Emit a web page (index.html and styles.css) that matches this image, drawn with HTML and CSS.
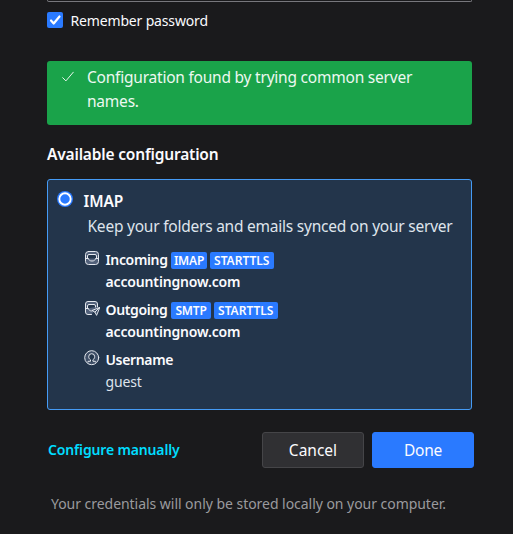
FILE: index.html
```
<!DOCTYPE html>
<html lang="en">
<head>
<meta charset="utf-8">
<title>Account Setup</title>
<link rel="stylesheet" href="styles.css">
</head>
<body>
<main class="setup">
  <div class="field"></div>
  <label class="remember">
    <svg class="checkbox" viewBox="0 0 16 16"><rect width="16" height="16" rx="2" fill="#2a7aff"/><path d="M4 8.500l2.700 3L12.500 4.500" fill="none" stroke="#fff" stroke-width="2.200" stroke-linecap="round" stroke-linejoin="round"/></svg>
    <span class="remember-text">Remember password</span>
  </label>
  <div class="notice">
    <svg class="tick" viewBox="0 0 12 12"><path d="M.7 6.700l3.200 3.200L11.300 1.200" fill="none" stroke="#e8f6ed" stroke-linecap="round" stroke-linejoin="round"/></svg>
    <p class="notice-text">Configuration found by trying common server names.</p>
  </div>
  <h2 class="heading">Available configuration</h2>
  <section class="config">
    <div class="option">
      <svg class="radio" viewBox="0 0 16 16"><circle cx="8" cy="8" r="8" fill="#2a7aff"/><circle cx="8" cy="8" r="5.700" fill="none" stroke="#fff" stroke-width="1.900"/></svg>
      <span class="protocol">IMAP</span>
    </div>
    <p class="description">Keep your folders and emails synced on your server</p>
    <div class="server">
      <svg class="icon" viewBox="0 0 16 16" fill="none" stroke="#e4e8ee" stroke-linejoin="round" stroke-linecap="round"><rect x="1.500" y="1.500" width="13" height="13" rx="3" fill="#52617a"/><path d="M3.500 8.500V6A1.500 1.500 0 0 1 5 4.500h6A1.500 1.500 0 0 1 12.500 6v2.500" fill="#24364c"/><path d="M1.500 8.500h3c.3 1.600 1.300 2.500 3.500 2.500s3.200-.9 3.500-2.500h3"/></svg>
      <div class="details">
        <div class="row"><span class="name incoming">Incoming</span><span class="tag imap">IMAP</span><span class="tag tls">STARTTLS</span></div>
        <div class="host">accountingnow.com</div>
      </div>
    </div>
    <div class="server">
      <svg class="icon" viewBox="0 0 16 16" fill="none" stroke="#e4e8ee" stroke-linejoin="round" stroke-linecap="round"><path d="M7.500 14.500H4A2.500 2.500 0 0 1 1.500 12V4A2.500 2.500 0 0 1 4 1.500h7A2.500 2.500 0 0 1 13.500 4v3" fill="#52617a"/><path d="M3.500 8.500V6A1.500 1.500 0 0 1 5 4.500h5A1.500 1.500 0 0 1 11.500 6v1" fill="#24364c"/><path d="M1.500 8.500h3c.3 1.600 1.300 2.500 3 2.500"/><path d="M15.500 7.500l-7.500 3 2.900 1.500 1.500 3zM11 12l4.500-4.500" fill="#40516a"/></svg>
      <div class="details">
        <div class="row"><span class="name outgoing">Outgoing</span><span class="tag smtp">SMTP</span><span class="tag tls">STARTTLS</span></div>
        <div class="host">accountingnow.com</div>
      </div>
    </div>
    <div class="server">
      <svg class="icon user" viewBox="0 0 16 16" fill="none" stroke="#e4e8ee" stroke-linejoin="round" stroke-linecap="round"><circle cx="7.700" cy="7.700" r="7" fill="#3f4f67"/><path d="M4 12v-.7h2.500V9.800C5.200 8.900 4.700 7.900 4.700 6.700a3 3 0 0 1 6 0c0 1.200-.5 2.200-1.800 3.100v1.500h2.500v.7" fill="#24364c"/></svg>
      <div class="details">
        <div class="row"><span class="name username">Username</span></div>
        <div class="value">guest</div>
      </div>
    </div>
  </section>
  <footer class="actions">
    <a class="manual">Configure manually</a>
    <div class="buttons">
      <button class="button">Cancel</button>
      <button class="button primary">Done</button>
    </div>
  </footer>
  <p class="footnote">Your credentials will only be stored locally on your computer.</p>
</main>
</body>
</html>
```
FILE: styles.css
```
* { box-sizing: border-box; }
body { margin: 0; height: 534px; overflow: hidden; background: #1a1a1c; color: #fbfbfe; font-family: "Noto Sans", sans-serif; font-size: 14px; }
p, h2 { margin: 0; }
svg { display: block; flex: none; }
.setup { width: 427px; margin-left: 47px; }
.field { width: 425px; height: 2px; border: 1px solid #77777c; border-top: 0; border-radius: 0 0 3px 3px; }
.remember { display: flex; align-items: center; gap: 7.5px; height: 20px; margin-top: 8px; line-height: 20px; letter-spacing: -.16px; }
.remember-text { padding-top: 2px; }
.checkbox, .radio { width: 16px; height: 16px; }
.notice { display: flex; width: 425px; height: 64px; margin-top: 31px; padding: 4px 40px 0 15px; border-radius: 3px; background: #1aa34a; font-size: 15.5px; line-height: 24px; letter-spacing: -.22px; }
.tick { width: 12px; height: 12px; margin: 6px 13px 0 0; }
.notice-text { color: #edf8f1; }
.heading { margin-top: 17px; font-size: 15.5px; font-weight: 600; line-height: 24px; letter-spacing: -.18px; }
.config { width: 425px; height: 231px; margin-top: 13px; padding: 9px 0 0 9px; border: 1px solid #459bf5; border-radius: 3px; background: #23354b; }
.option { display: flex; gap: 10.5px; height: 24px; font-size: 15.5px; font-weight: 600; line-height: 24px; letter-spacing: -.1px; }
.radio { margin-top: 2px; }
.description { height: 24px; padding-left: 30.5px; color: #dfe4eb; font-size: 15.5px; line-height: 26px; letter-spacing: -.23px; white-space: nowrap; }
.server { display: flex; height: 50px; margin-left: 27px; padding-top: 11px; }
.icon { width: 16px; height: 16px; margin: 2px 5.5px 0 0; }
.details { margin-top: 1px; font-weight: 600; line-height: 22px; letter-spacing: -.15px; }
.row { display: flex; align-items: center; height: 22px; }
.name { letter-spacing: -.35px; }
.incoming, .outgoing { width: 65.5px; margin-right: 0; }
.incoming + .tag, .outgoing + .tag { margin-right: 3px; }
.tag { height: 17px; border-radius: 2px; background: #2a7aff; font-size: 12px; font-weight: 600; line-height: 17px; letter-spacing: -.2px; text-align: center; }
.imap { width: 36px; }
.smtp { width: 40px; }
.tls { width: 63.5px; letter-spacing: 0; }
.value { color: #dfe4eb; font-weight: 400; }
.actions { display: flex; justify-content: space-between; align-items: center; height: 36px; margin-top: 22px; }
.manual { margin: 0 0 2px 1px; color: #00ddff; font-weight: 600; letter-spacing: -.15px; }
.buttons { display: flex; gap: 8px; }
.button { width: 102px; height: 36px; padding: 0; border: 1px solid #454548; border-radius: 3px; background: #303033; color: #fbfbfe; font: 15.5px "Noto Sans", sans-serif; }
.primary { border-color: #2a7aff; background: #2a7aff; letter-spacing: -.2px; }
.footnote { margin: 26px 0 0 4px; color: #9a9a9e; line-height: 20px; letter-spacing: -.04px; white-space: nowrap; }
```
